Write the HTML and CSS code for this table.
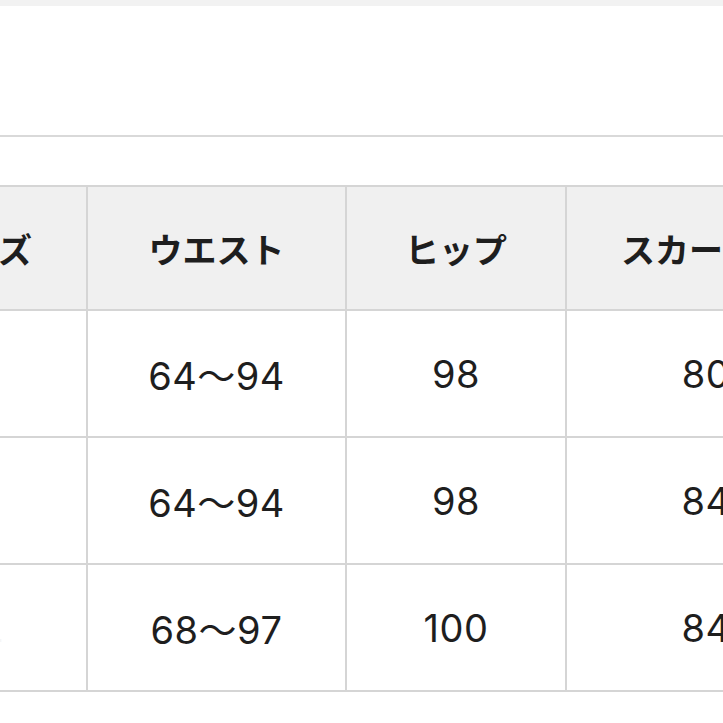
FILE: index.html
```html
<!DOCTYPE html>
<html lang="ja">
<head>
<meta charset="utf-8">
<link rel="stylesheet" href="styles.css">
</head>
<body>
<div class="topband"></div>
<div class="spacer"></div>
<div class="divider"></div>
<div class="gap"></div>
<table class="size-table">
  <colgroup>
    <col class="c0"><col class="c1"><col class="c2"><col class="c3">
  </colgroup>
  <thead>
    <tr><th>サイズ</th><th>ウエスト</th><th>ヒップ</th><th>スカート丈</th></tr>
  </thead>
  <tbody>
    <tr><td>M</td><td>64～94</td><td>98</td><td>80</td></tr>
    <tr><td>L</td><td>64～94</td><td>98</td><td>84</td></tr>
    <tr><td>LL</td><td>68～97</td><td>100</td><td>84</td></tr>
  </tbody>
</table>
</body>
</html>
```
FILE: styles.css
```css
html, body {
  margin: 0;
  padding: 0;
  background: #ffffff;
  overflow: hidden;
  width: 723px;
  height: 723px;
}
body {
  font-family: "Inter", "Noto Sans CJK JP", sans-serif;
  color: #1e1e1e;
}
.topband {
  height: 6px;
  background: #f2f2f2;
}
.spacer {
  height: 129px;
}
.divider {
  height: 2px;
  background: #d9d9d9;
}
.gap {
  height: 48px;
}
.size-table {
  border-collapse: collapse;
  table-layout: fixed;
  margin-left: -125px;
  width: 970px;
}
.c0 { width: 211px; }
.c1 { width: 259px; }
.c2 { width: 220px; }
.c3 { width: 280px; }
.size-table th,
.size-table td {
  border: 2px solid #d5d5d5;
  text-align: center;
  padding: 0;
}
.size-table th {
  background: #f0f0f0;
  height: 122px;
  font-family: "Noto Sans CJK JP", sans-serif;
  font-weight: 700;
  font-size: 34px;
}
.size-table td {
  height: 125px;
  font-size: 38px;
  font-weight: 400;
  letter-spacing: 0.5px;
}
.size-table td:first-child {
  color: #f6f6f6;
}
```
